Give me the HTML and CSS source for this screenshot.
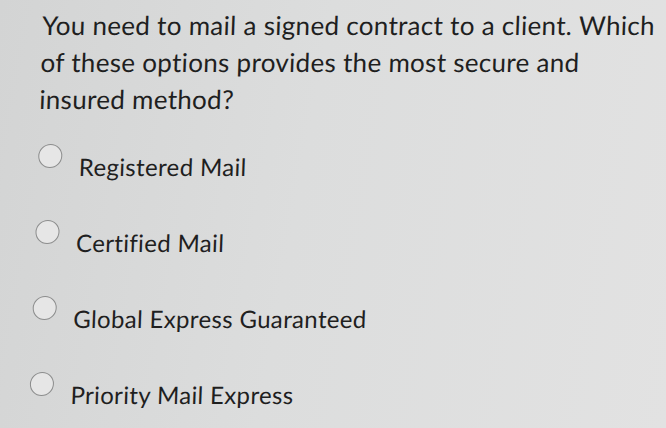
FILE: index.html
```html
<!DOCTYPE html>
<html>
<head>
<meta charset="utf-8">
<link rel="stylesheet" href="styles.css">
</head>
<body>
<div class="page">
  <p class="question">You need to mail a signed contract to a client. Which of these options provides the most secure and insured method?</p>
  <ul class="options">
    <li class="option"><span class="radio"></span><span class="label">Registered Mail</span></li>
    <li class="option"><span class="radio"></span><span class="label">Certified Mail</span></li>
    <li class="option"><span class="radio"></span><span class="label">Global Express Guaranteed</span></li>
    <li class="option"><span class="radio"></span><span class="label">Priority Mail Express</span></li>
  </ul>
</div>
</body>
</html>
```
FILE: styles.css
```css
html, body {
  margin: 0;
  padding: 0;
  width: 666px;
  height: 428px;
  overflow: hidden;
}
body {
  background: linear-gradient(100deg, #d3d4d4 0%, #dcdddd 45%, #e2e2e2 100%);
  font-family: Lato, "Open Sans", sans-serif;
  color: #1f1f1f;
}
.page {
  padding: 7px 0 0 43px;
  transform-origin: 0 0;
  transform: skewX(-2.1deg);
}
.question {
  margin: 0;
  width: 618px;
  font-size: 26px;
  line-height: 37px;
  letter-spacing: 0.3px;
}
.options {
  list-style: none;
  margin: 34px 0 0 1px;
  padding: 0;
  display: flex;
  flex-direction: column;
  gap: 46px;
}
.option {
  display: flex;
  align-items: flex-start;
  gap: 17px;
  height: 30px;
}
.radio {
  flex: none;
  width: 22px;
  height: 22px;
  border: 1.5px solid #8c8d8d;
  border-radius: 50%;
  background: #e6e6e6;
  margin-top: -8px;
}
.label {
  font-size: 24px;
  line-height: 30px;
  letter-spacing: 0.35px;
  color: #1f1f1f;
}
```
